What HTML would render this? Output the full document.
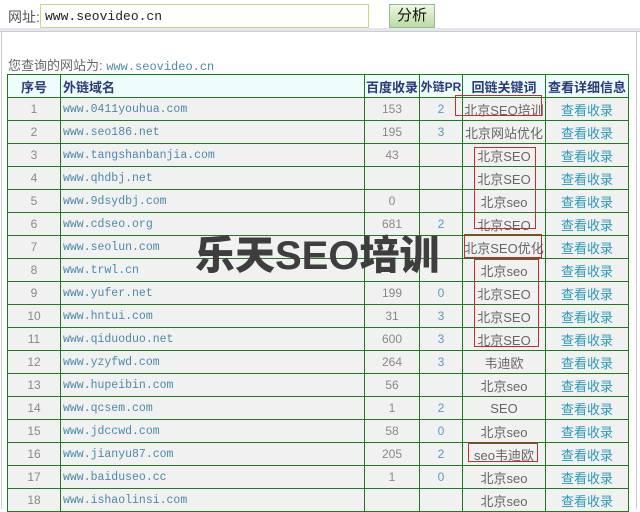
<!DOCTYPE html>
<html><head><meta charset="utf-8"><style>
*{margin:0;padding:0;box-sizing:border-box}
body{width:640px;height:509px;overflow:hidden;background:#fff;font-family:"Liberation Sans","Noto Sans CJK SC",sans-serif;font-size:13px;color:#555;position:relative}
.abs{position:absolute}
table{position:absolute;left:7px;top:74px;border-collapse:collapse;table-layout:fixed;width:621px}
td,th{border:1px solid #1f7a1f;height:23px;text-align:center;padding:0;white-space:nowrap;overflow:hidden}
th{background:#eefcfc;color:#2a3a7a;font-weight:bold;font-size:13px}
td{background:#f1f1f1;color:#888;font-size:12px}
td.d{text-align:left;padding-left:2px;color:#4a8aa8;font-family:"Liberation Mono",monospace;font-size:11.5px}
td.p{color:#5a9ac0}
td.k{color:#666;font-size:13px}
td.v{color:#2a9ab8;font-size:13px}
.box{position:absolute;border:1px solid #c03030}
</style></head><body>
<div class="abs" style="left:8px;top:7px;font-size:14px;color:#555">网址:</div>
<div class="abs" style="left:40px;top:4px;width:329px;height:24px;border:1px solid #c8d880;font-family:'Liberation Mono',monospace;font-size:13px;color:#222;padding:4px 4px">www.seovideo.cn</div>
<div class="abs" style="left:389px;top:4px;width:46px;height:24px;border:1px solid #9ab890;background:linear-gradient(#eef8e4,#b8dca0);font-size:15px;color:#111;text-align:center;line-height:22px">分析</div>
<div class="abs" style="left:0;top:28px;width:640px;height:4px;background:#e4e8ee;border-bottom:1px solid #ccc"></div>
<div class="abs" style="left:1px;top:32px;width:1px;height:477px;background:#ccc"></div>
<div class="abs" style="left:636px;top:32px;width:1px;height:477px;background:#ccc"></div>
<div class="abs" style="left:8px;top:55px;font-size:13px;color:#666">您查询的网站为: <span style="font-family:'Liberation Mono',monospace;font-size:12px;color:#4a8aa8">www.seovideo.cn</span></div>
<table>
<colgroup><col style="width:53px"><col style="width:304px"><col style="width:55px"><col style="width:43px"><col style="width:83px"><col style="width:83px"></colgroup>
<tr><th>序号</th><th style="text-align:left;padding-left:2px">外链域名</th><th>百度收录</th><th style="font-size:12px">外链PR</th><th>回链关键词</th><th>查看详细信息</th></tr>
<tr><td>1</td><td class="d">www.0411youhua.com</td><td>153</td><td class="p">2</td><td class="k">北京SEO培训</td><td class="v">查看收录</td></tr>
<tr><td>2</td><td class="d">www.seo186.net</td><td>195</td><td class="p">3</td><td class="k">北京网站优化</td><td class="v">查看收录</td></tr>
<tr><td>3</td><td class="d">www.tangshanbanjia.com</td><td>43</td><td class="p"></td><td class="k">北京SEO</td><td class="v">查看收录</td></tr>
<tr><td>4</td><td class="d">www.qhdbj.net</td><td></td><td class="p"></td><td class="k">北京SEO</td><td class="v">查看收录</td></tr>
<tr><td>5</td><td class="d">www.9dsydbj.com</td><td>0</td><td class="p"></td><td class="k">北京seo</td><td class="v">查看收录</td></tr>
<tr><td>6</td><td class="d">www.cdseo.org</td><td>681</td><td class="p">2</td><td class="k">北京SEO</td><td class="v">查看收录</td></tr>
<tr><td>7</td><td class="d">www.seolun.com</td><td></td><td class="p"></td><td class="k">北京SEO优化</td><td class="v">查看收录</td></tr>
<tr><td>8</td><td class="d">www.trwl.cn</td><td></td><td class="p"></td><td class="k">北京seo</td><td class="v">查看收录</td></tr>
<tr><td>9</td><td class="d">www.yufer.net</td><td>199</td><td class="p">0</td><td class="k">北京SEO</td><td class="v">查看收录</td></tr>
<tr><td>10</td><td class="d">www.hntui.com</td><td>31</td><td class="p">3</td><td class="k">北京SEO</td><td class="v">查看收录</td></tr>
<tr><td>11</td><td class="d">www.qiduoduo.net</td><td>600</td><td class="p">3</td><td class="k">北京SEO</td><td class="v">查看收录</td></tr>
<tr><td>12</td><td class="d">www.yzyfwd.com</td><td>264</td><td class="p">3</td><td class="k">韦迪欧</td><td class="v">查看收录</td></tr>
<tr><td>13</td><td class="d">www.hupeibin.com</td><td>56</td><td class="p"></td><td class="k">北京seo</td><td class="v">查看收录</td></tr>
<tr><td>14</td><td class="d">www.qcsem.com</td><td>1</td><td class="p">2</td><td class="k">SEO</td><td class="v">查看收录</td></tr>
<tr><td>15</td><td class="d">www.jdccwd.com</td><td>58</td><td class="p">0</td><td class="k">北京seo</td><td class="v">查看收录</td></tr>
<tr><td>16</td><td class="d">www.jianyu87.com</td><td>205</td><td class="p">2</td><td class="k">seo韦迪欧</td><td class="v">查看收录</td></tr>
<tr><td>17</td><td class="d">www.baiduseo.cc</td><td>1</td><td class="p">0</td><td class="k">北京seo</td><td class="v">查看收录</td></tr>
<tr><td>18</td><td class="d">www.ishaolinsi.com</td><td></td><td class="p"></td><td class="k">北京seo</td><td class="v">查看收录</td></tr>
</table>
<div class="box" style="left:455px;top:95px;width:87px;height:21px"></div>
<div class="box" style="left:474px;top:147px;width:62px;height:82px"></div>
<div class="box" style="left:464px;top:234px;width:78px;height:24px"></div>
<div class="box" style="left:474px;top:259px;width:65px;height:88px"></div>
<div class="box" style="left:468px;top:443px;width:70px;height:19px"></div>
<div class="abs" style="left:195px;top:230px;font-size:40px;font-weight:900;color:#3e3e3e;white-space:nowrap;font-family:'Liberation Sans','Noto Sans CJK SC',sans-serif;line-height:52px">乐天SEO培训</div>
</body></html>
